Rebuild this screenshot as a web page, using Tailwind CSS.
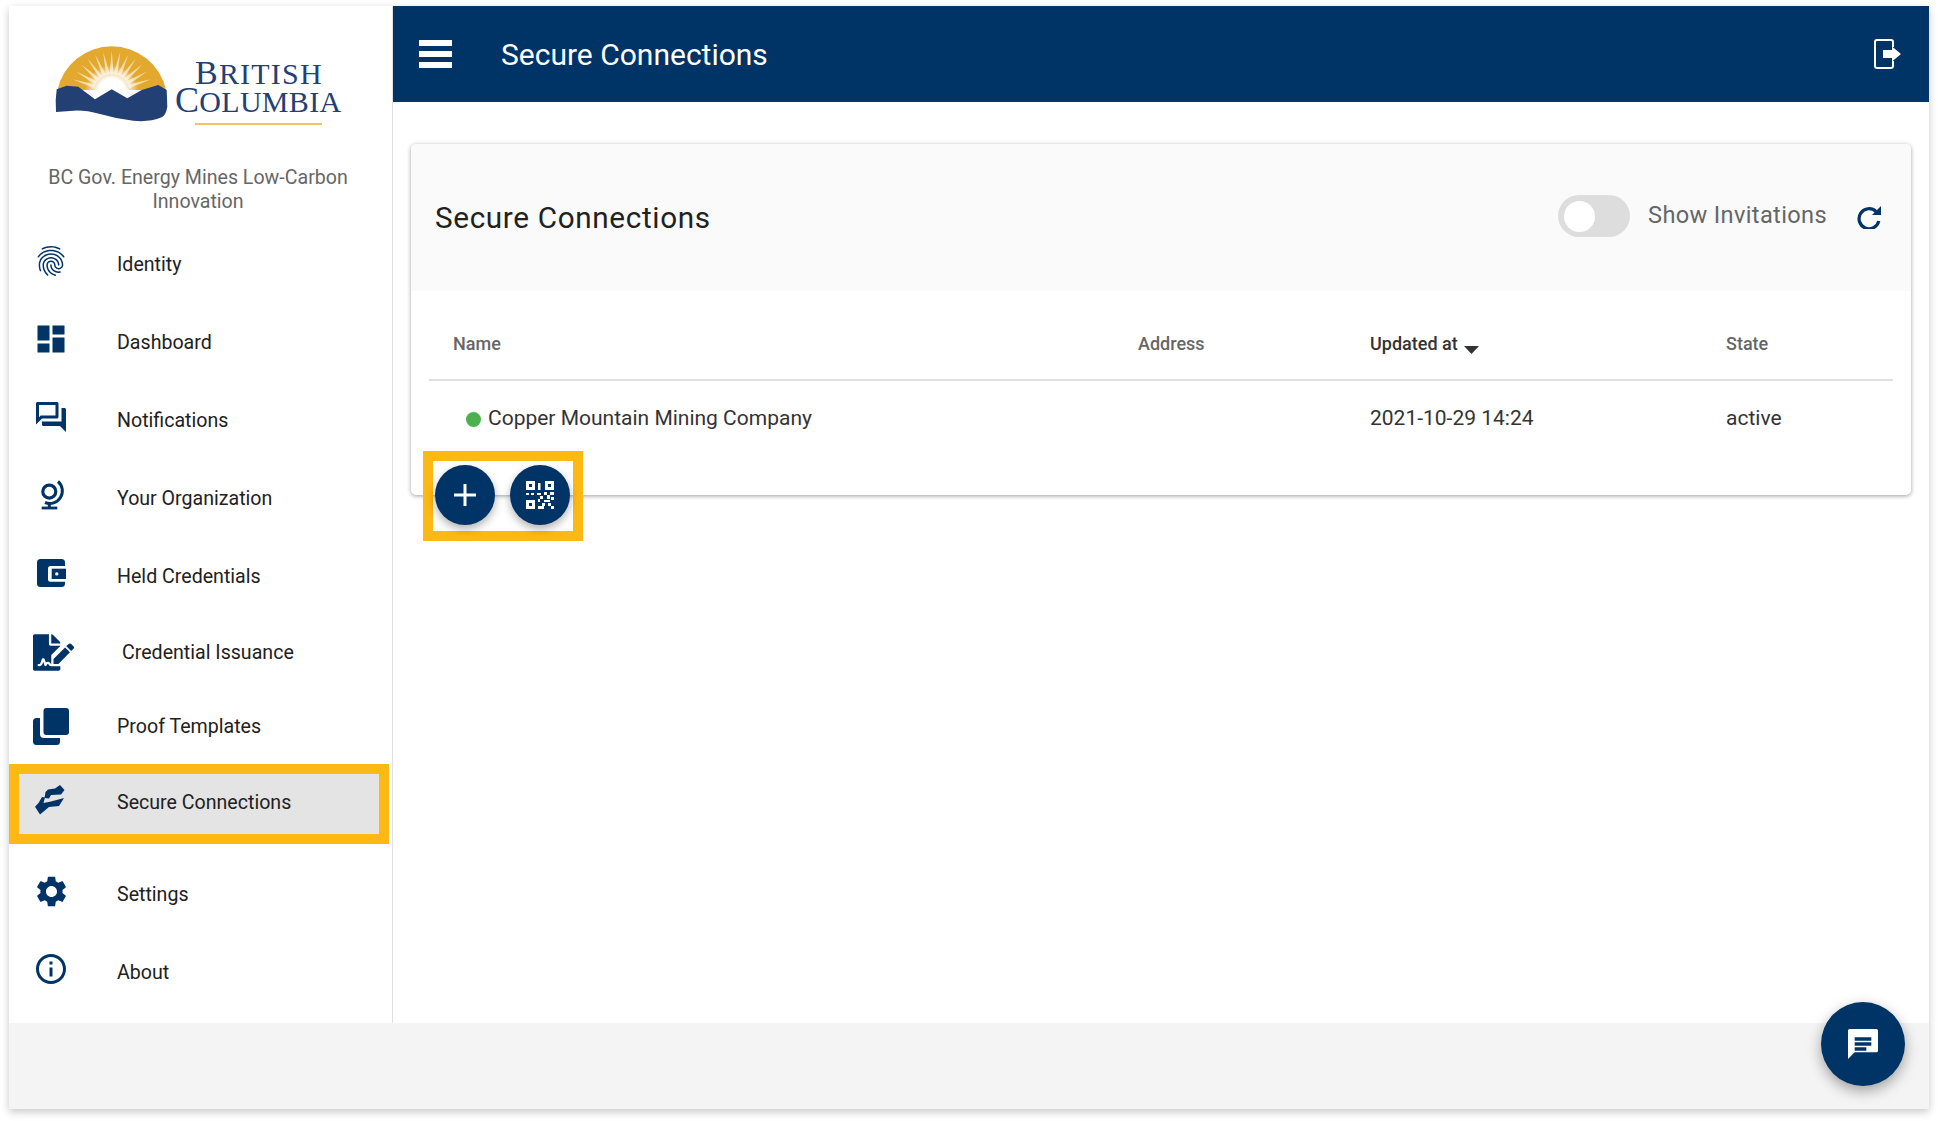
<!DOCTYPE html>
<html lang="en">
<head>
  <meta charset="UTF-8" />
  <title>Secure Connections</title>
  <script src="https://cdn.jsdelivr.net/npm/@tailwindcss/browser@4"></script>
</head>
<body class="bg-white h-screen overflow-hidden pt-[6px] px-[9px] font-['Roboto',sans-serif]">
  <div class="relative h-[1103px] flex flex-col bg-white shadow-[0_3px_8px_rgba(0,0,0,0.22)]">
    <div class="flex h-[1017px]">

      <!-- Sidebar -->
      <aside class="w-[384px] shrink-0 border-r border-[#e0e0e0] flex flex-col text-[19.6px] text-[#212121]">
        <!-- Logo -->
        <div class="flex pt-[40px] pl-[46px] h-[125px]">
          <svg width="112" height="75" viewBox="0 0 112 75" class="shrink-0 overflow-visible">
            <defs>
              <radialGradient id="glow" cx="0.5" cy="0.5" r="0.5">
                <stop offset="0.5" stop-color="#fff" />
                <stop offset="1" stop-color="#fff" stop-opacity="0" />
              </radialGradient>
              <polygon id="ray" points="54.7,28 58.7,28 56.7,5" fill="#fff" fill-opacity="0.6" />
            </defs>
            <path d="M2.5 44A55.5 55.5 0 0 1 111 44Z" fill="#e3a92f" />
            <use href="#ray" transform="rotate(-72 56.7 46)" />
            <use href="#ray" transform="rotate(-60 56.7 46)" />
            <use href="#ray" transform="rotate(-48 56.7 46)" />
            <use href="#ray" transform="rotate(-36 56.7 46)" />
            <use href="#ray" transform="rotate(-24 56.7 46)" />
            <use href="#ray" transform="rotate(-12 56.7 46)" />
            <use href="#ray" />
            <use href="#ray" transform="rotate(12 56.7 46)" />
            <use href="#ray" transform="rotate(24 56.7 46)" />
            <use href="#ray" transform="rotate(36 56.7 46)" />
            <use href="#ray" transform="rotate(48 56.7 46)" />
            <use href="#ray" transform="rotate(60 56.7 46)" />
            <use href="#ray" transform="rotate(72 56.7 46)" />
            <circle cx="56.7" cy="46" r="27" fill="url(#glow)" />
            <path d="M1.7 43.3L11.7 39.7L23.3 40.7L40 53.3L56.7 43.3L72.3 52.3L86.7 44L103.3 39L111.7 44L112.3 60.7Q111 69 106.7 71.3Q94 76.5 78.3 74.7Q62 73 45 68Q30 64 18.3 64.7L1 66Q0 54 1.7 43.3Z" fill="#234075" />
          </svg>
          <div class="ml-[8px] w-[170px] font-['Liberation_Serif',serif] text-[#234075]">
            <div class="mt-[12px] ml-[20px] h-[27px] leading-[30px] whitespace-nowrap tracking-[1.2px] text-[30px]"><span class="text-[34px]">B</span>RITISH</div>
            <div class="h-[30px] leading-[30px] whitespace-nowrap tracking-[0.3px] text-[30px]"><span class="text-[36px]">C</span>OLUMBIA</div>
            <div class="mt-[8px] ml-[20px] w-[127px] h-[2px] bg-[#f0c463]"></div>
          </div>
        </div>
        <p class="mt-[35px] ml-[29px] w-[320px] text-center text-[#666666] text-[19.6px] leading-[24px]">BC Gov. Energy Mines Low-Carbon Innovation</p>

        <!-- Nav -->
        <nav class="mt-[12px] flex flex-col">
          <a class="flex items-center h-[78px] pl-[15px]">
            <span class="w-[54px] flex justify-center -translate-y-[4px]">
              <svg width="36" height="36" viewBox="0 0 24 24" fill="#003366"><path d="M17.81 4.47c-.08 0-.16-.02-.23-.06C15.66 3.42 14 3 12.01 3c-1.98 0-3.86.47-5.57 1.41-.24.13-.54.04-.68-.2-.13-.24-.04-.55.2-.68C7.82 2.52 9.86 2 12.01 2c2.13 0 3.99.47 6.03 1.52.25.13.34.43.21.67-.09.18-.26.28-.44.28zM3.5 9.72c-.1 0-.2-.03-.29-.09-.23-.16-.28-.47-.12-.7.99-1.4 2.25-2.5 3.75-3.27C9.98 4.04 14 4.03 17.15 5.65c1.5.77 2.76 1.86 3.75 3.25.16.22.11.54-.12.7-.23.16-.54.11-.7-.12-.9-1.26-2.04-2.25-3.39-2.94-2.87-1.47-6.54-1.47-9.4.01-1.36.7-2.5 1.7-3.4 2.96-.08.14-.23.21-.39.21zm6.25 12.07c-.13 0-.26-.05-.35-.15-.87-.87-1.34-1.43-2.01-2.64-.69-1.23-1.05-2.73-1.05-4.34 0-2.97 2.54-5.39 5.66-5.39s5.66 2.42 5.66 5.39c0 .28-.22.5-.5.5s-.5-.22-.5-.5c0-2.42-2.09-4.39-4.66-4.39-2.57 0-4.66 1.97-4.66 4.39 0 1.44.32 2.77.93 3.85.64 1.15 1.08 1.64 1.85 2.42.19.2.19.51 0 .71-.11.1-.24.15-.37.15zm7.17-1.85c-1.19 0-2.24-.3-3.1-.89-1.49-1.01-2.38-2.65-2.38-4.39 0-.28.22-.5.5-.5s.5.22.5.5c0 1.41.72 2.74 1.94 3.56.71.48 1.54.71 2.54.71.24 0 .64-.03 1.04-.1.27-.05.53.13.58.41.05.27-.13.53-.41.58-.57.11-1.07.12-1.21.12zM14.91 22c-.04 0-.09-.01-.13-.02-1.59-.44-2.63-1.03-3.72-2.1-1.4-1.39-2.17-3.24-2.17-5.22 0-1.62 1.38-2.94 3.08-2.94 1.7 0 3.08 1.32 3.08 2.94 0 1.07.93 1.94 2.08 1.94s2.08-.87 2.08-1.94c0-3.77-3.25-6.83-7.25-6.83-2.84 0-5.44 1.58-6.61 4.03-.39.81-.59 1.76-.59 2.8 0 .78.07 2.01.67 3.61.1.26-.03.55-.29.64-.26.1-.55-.04-.64-.29-.49-1.31-.73-2.61-.73-3.96 0-1.2.23-2.29.68-3.24 1.33-2.79 4.28-4.6 7.51-4.6 4.55 0 8.25 3.51 8.25 7.83 0 1.62-1.38 2.94-3.08 2.94s-3.08-1.32-3.08-2.94c0-1.07-.93-1.94-2.08-1.94s-2.08.87-2.08 1.94c0 1.71.66 3.31 1.87 4.51.95.94 1.86 1.46 3.27 1.85.27.07.42.35.35.61-.05.23-.26.38-.47.38z"/></svg>
            </span>
            <span class="ml-[39px]">Identity</span>
          </a>
          <a class="flex items-center h-[78px] pl-[15px]">
            <span class="w-[54px] flex justify-center -translate-y-[4px]">
              <svg width="36" height="36" viewBox="0 0 24 24" fill="#003366"><path d="M3 13h8V3H3v10zm0 8h8v-6H3v6zm10 0h8V11h-8v10zm0-18v6h8V3h-8z"/></svg>
            </span>
            <span class="ml-[39px]">Dashboard</span>
          </a>
          <a class="flex items-center h-[78px] pl-[15px]">
            <span class="w-[54px] flex justify-center -translate-y-[4px]">
              <svg width="36" height="36" viewBox="0 0 24 24" fill="#003366"><path d="M15 4v7H5.17L4 12.17V4h11m1-2H3c-.55 0-1 .45-1 1v14l4-4h10c.55 0 1-.45 1-1V3c0-.55-.45-1-1-1zm5 4h-2v9H6v2c0 .55.45 1 1 1h11l4 4V7c0-.55-.45-1-1-1z"/></svg>
            </span>
            <span class="ml-[39px]">Notifications</span>
          </a>
          <a class="flex items-center h-[78px] pl-[15px]">
            <span class="w-[54px] flex justify-center -translate-y-[4px]">
              <svg width="36" height="36" viewBox="0 0 36 36" fill="none" stroke="#003366">
                <circle cx="16.3" cy="14.6" r="6.5" stroke-width="3.2" />
                <path d="M25 4.5A12.5 12.5 0 0 1 12 25.5" stroke-width="3" />
                <path d="M16.3 25v5" stroke-width="3" />
                <path d="M8.7 31h15.6" stroke-width="2.8" />
              </svg>
            </span>
            <span class="ml-[39px]">Your Organization</span>
          </a>
          <a class="flex items-center h-[78px] pl-[15px]">
            <span class="w-[54px] flex justify-center -translate-y-[4px]">
              <svg width="36" height="36" viewBox="0 0 36 36">
                <rect x="4" y="4" width="28" height="28" rx="3.5" fill="#003366" />
                <path d="M34 11H17.5a2.5 2.5 0 0 0-2.5 2.5v10.7a2.5 2.5 0 0 0 2.5 2.5H34Z" fill="#fff" />
                <rect x="18.7" y="13.7" width="14.3" height="10.3" fill="#003366" />
                <circle cx="23.8" cy="18.9" r="1.7" fill="#fff" />
              </svg>
            </span>
            <span class="ml-[39px]">Held Credentials</span>
          </a>
          <a class="flex items-center h-[73px] pl-[15px]">
            <span class="w-[54px] flex justify-center translate-x-[2px]">
              <svg width="41" height="37" viewBox="0 0 576 512" fill="#003366"><path d="M218.17 424.14c-2.95-5.92-8.09-6.52-10.17-6.52s-7.22.59-10.02 6.19l-7.67 15.34c-6.37 12.78-25.03 11.37-29.48-2.09L144 386.59l-10.61 31.88c-5.89 17.66-22.38 29.53-41 29.53H80c-8.84 0-16-7.16-16-16s7.16-16 16-16h12.39c4.83 0 9.11-3.08 10.64-7.66l18.19-54.64c3.3-9.81 12.44-16.41 22.78-16.41s19.48 6.59 22.77 16.41l13.88 41.64c19.77-16.19 54.05-9.7 66 14.16 2.02 4.06 5.96 6.5 10.16 6.5v-125.4l128-127.05V160H248c-13.2 0-24-10.8-24-24V0H24C10.7 0 0 10.7 0 24v464c0 13.3 10.7 24 24 24h336c13.3 0 24-10.7 24-24v-40l-128-.12c-16.12-.03-30.69-9.02-37.83-23.74zM384 121.9c0-6.3-2.5-12.4-7-16.9L279.1 7c-4.5-4.5-10.6-7-17-7H256v128h128v-6.1zm-96 225.06V416h68.99l161.68-162.78-67.88-67.88L288 346.96zm280.54-179.63l-31.87-31.87c-9.94-9.94-26.07-9.94-36.01 0l-27.25 27.25-4.79 4.79 67.88 67.88 32.04-32.04c9.95-9.94 9.95-26.07 0-36.01z"/></svg>
            </span>
            <span class="ml-[44px]">Credential Issuance</span>
          </a>
          <a class="flex items-center h-[75px] pl-[15px]">
            <span class="w-[54px] flex justify-center">
              <svg width="36" height="37" viewBox="0 0 36 37">
                <rect x="0" y="10" width="27" height="27" rx="3.5" fill="#003366" />
                <rect x="7" y="0" width="29" height="30" rx="4" fill="#fff" />
                <rect x="10.5" y="0" width="25.5" height="27" rx="3" fill="#003366" />
              </svg>
            </span>
            <span class="ml-[39px]">Proof Templates</span>
          </a>
          <a class="flex items-center w-[380px] h-[80px] pl-[5px] border-[10px] border-[#fdb913] bg-[#e4e4e4]">
            <span class="w-[54px] flex justify-center -translate-y-[6px]">
              <svg width="36" height="36" viewBox="0 0 36 36" fill="#003366">
                <path d="M27 5L31.5 10L28 14.5L18 15L16 18.5L11.5 18L12.5 12L15 9.5L22 8.5Z" />
                <path d="M2 26.7L5.5 23L9 17L12 17.5L10.5 23L18 21.5L31 18L26 26L16 27L7 34.5Z" />
              </svg>
            </span>
            <span class="ml-[39px] -translate-y-[1px]">Secure Connections</span>
          </a>
          <a class="mt-[12px] flex items-center h-[78px] pl-[15px]">
            <span class="w-[54px] flex justify-center -translate-y-[4px]">
              <svg width="37" height="37" viewBox="0 0 24 24" fill="#003366"><path d="M19.14 12.94c.04-.3.06-.61.06-.94 0-.32-.02-.64-.07-.94l2.03-1.58c.18-.14.23-.41.12-.61l-1.92-3.32c-.12-.22-.37-.29-.59-.22l-2.39.96c-.5-.38-1.03-.7-1.62-.94l-.36-2.54c-.04-.24-.24-.41-.48-.41h-3.84c-.24 0-.43.17-.47.41l-.36 2.54c-.59.24-1.13.57-1.62.94l-2.39-.96c-.22-.08-.47 0-.59.22L2.74 8.87c-.12.21-.08.47.12.61l2.03 1.58c-.05.3-.09.63-.09.94s.02.64.07.94l-2.03 1.58c-.18.14-.23.41-.12.61l1.92 3.32c.12.22.37.29.59.22l2.39-.96c.5.38 1.03.7 1.62.94l.36 2.54c.05.24.24.41.48.41h3.84c.24 0 .44-.17.47-.41l.36-2.54c.59-.24 1.13-.56 1.62-.94l2.39.96c.22.08.47 0 .59-.22l1.92-3.32c.12-.22.07-.47-.12-.61l-2.01-1.58zM12 15.6c-1.98 0-3.6-1.62-3.6-3.6s1.62-3.6 3.6-3.6 3.6 1.62 3.6 3.6-1.62 3.6-3.6 3.6z"/></svg>
            </span>
            <span class="ml-[39px]">Settings</span>
          </a>
          <a class="flex items-center h-[78px] pl-[15px]">
            <span class="w-[54px] flex justify-center -translate-y-[4px]">
              <svg width="36" height="36" viewBox="0 0 24 24" fill="#003366"><path d="M11 7h2v2h-2zm0 4h2v6h-2zm1-9C6.48 2 2 6.48 2 12s4.48 10 10 10 10-4.48 10-10S17.52 2 12 2zm0 18c-4.41 0-8-3.59-8-8s3.59-8 8-8 8 3.59 8 8-3.59 8-8 8z"/></svg>
            </span>
            <span class="ml-[39px]">About</span>
          </a>
        </nav>
      </aside>

      <!-- Main -->
      <div class="flex-1 flex flex-col min-w-0">
        <header class="h-[96px] shrink-0 bg-[#003366] text-white flex items-center pl-[26px] pr-[28px]">
          <div class="w-[33px] flex flex-col gap-[5.5px]">
            <div class="h-[5.5px] bg-white"></div>
            <div class="h-[5.5px] bg-white"></div>
            <div class="h-[5.5px] bg-white"></div>
          </div>
          <h1 class="ml-[49px] mt-[2px] text-[30px] leading-none">Secure Connections</h1>
          <svg class="ml-auto" width="27" height="30" viewBox="0 0 27 30" fill="none">
            <path d="M19 8V3a2 2 0 0 0-2-2H3a2 2 0 0 0-2 2v24a2 2 0 0 0 2 2h14a2 2 0 0 0 2-2v-5" stroke="#fff" stroke-width="2" />
            <path d="M9 11h9V7.5L27 15l-9 7.5V19H9Z" fill="#fff" />
          </svg>
        </header>

        <main class="flex-1 px-[18px] pt-[42px]">
          <section class="relative rounded-[5px] bg-white shadow-[0_1px_4px_rgba(0,0,0,0.38)]">
            <div class="h-[147px] rounded-t-[5px] bg-[#fafafa] flex items-center pl-[24px] pr-[30px]">
              <h2 class="mt-[2px] text-[29.7px] tracking-[0.65px] text-[#212121]">Secure Connections</h2>
              <div class="ml-auto -mt-[3px] w-[72px] h-[42px] rounded-full bg-[#dddddd] flex items-center pl-[6px]">
                <div class="w-[31px] h-[31px] rounded-full bg-white"></div>
              </div>
              <span class="ml-[18px] -mt-[3px] text-[23.6px] tracking-[0.35px] text-[#666666]">Show Invitations</span>
              <svg class="ml-[30px] -mt-[1px]" width="24" height="24" viewBox="0 0 24 24" fill="none">
                <path d="M19 6.5A10 10 0 1 0 21.8 16" stroke="#003366" stroke-width="3.2" />
                <path d="M24 1v9h-9Z" fill="#003366" />
              </svg>
            </div>

            <div class="mx-[18px] pb-[39px]">
              <div class="h-[90px] pt-[17px] border-b-2 border-[#e0e0e0] grid grid-cols-[685px_232px_356px_1fr] items-center pl-[24px] text-[18px] font-medium text-[#666666]">
                <span>Name</span>
                <span>Address</span>
                <span class="flex items-center text-[#333333]">Updated at
                  <svg class="ml-[6px] mt-[13px]" width="15" height="8" viewBox="0 0 15 8" fill="#333333"><path d="M0 0h15L7.5 8Z"/></svg>
                </span>
                <span>State</span>
              </div>
              <div class="h-[75px] pt-[1px] grid grid-cols-[685px_232px_356px_1fr] items-center pl-[24px] text-[21px] text-[#333333]">
                <span class="flex items-center">
                  <span class="ml-[13px] w-[15px] h-[15px] rounded-full bg-[#4caf50]"></span>
                  <span class="ml-[7px]">Copper Mountain Mining Company</span>
                </span>
                <span></span>
                <span>2021-10-29 14:24</span>
                <span>active</span>
              </div>
            </div>

            <!-- Highlighted action buttons -->
            <div class="absolute left-[12px] top-[307px] w-[160px] h-[90px] border-[10px] border-[#fdb913] flex items-center gap-[15px] pl-[2px] pb-[2px]">
              <button class="w-[60px] h-[60px] rounded-full bg-[#003366] shadow-[0_4px_8px_rgba(0,0,0,0.3)] flex items-center justify-center">
                <svg width="22" height="22" viewBox="0 0 22 22" fill="#fff"><path d="M9.5 0h3v9.5H22v3h-9.5V22h-3v-9.5H0v-3h9.5Z"/></svg>
              </button>
              <button class="w-[60px] h-[60px] rounded-full bg-[#003366] shadow-[0_4px_8px_rgba(0,0,0,0.3)] flex items-center justify-center">
                <svg width="28" height="28" viewBox="0 0 28 28" fill="#fff" fill-rule="evenodd"><path d="M0 0h9v9H0zM3 3v3h3V3zM19 0h9v9h-9zM22 3v3h3V3zM0 19h9v9H0zM3 22v3h3v-3zM12 2h2.5v7H12zM0 12h3v2H0zM5 12h3v2H5zM11 12h4v2h-4zM18 11h3v3h-3zM24 11h4v3h-4zM14 15h3v3h-3zM21 14h3v4h-3zM25 16h3v3h-3zM12 18h2v3h-2zM18 19h6v2h-6zM12 25h6v3h-6zM16 22h3v3h-3zM22 22h3v3h-3zM25 25h3v3h-3z"/></svg>
              </button>
            </div>
          </section>
        </main>
      </div>
    </div>

    <footer class="flex-1 bg-[#f4f4f4]"></footer>

    <button class="absolute right-[24px] bottom-[23px] w-[84px] h-[84px] rounded-full bg-[#003366] shadow-[0_5px_14px_rgba(0,0,0,0.35)] flex items-center justify-center">
      <svg width="40" height="40" viewBox="0 0 24 24" fill="#fff"><path d="M20 2H4c-.55 0-1 .45-1 1v17l4-4h13c.55 0 1-.45 1-1V3c0-.55-.45-1-1-1zM17 12H7v-2h10v2zm0-3H7V7h10v2zm-3 6H7v-2h7v2z" transform="translate(0 1)"/></svg>
    </button>
  </div>
</body>
</html>
